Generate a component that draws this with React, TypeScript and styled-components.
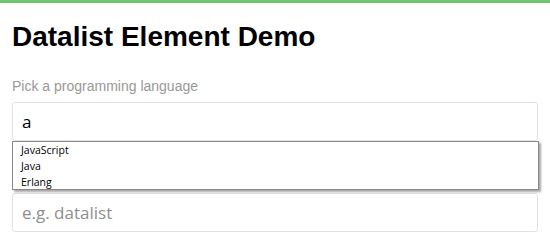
import React from "react";
import styled, { createGlobalStyle } from "styled-components";

const GlobalStyle = createGlobalStyle`
  html, body {
    margin: 0;
    padding: 0;
    background: #fff;
  }
  body {
    font-family: "Liberation Sans", Arial, sans-serif;
  }
`;

const TopBar = styled.div`
  height: 3px;
  background-color: #6cc66c;
`;

const Page = styled.div`
  padding: 0 12px;
`;

const Title = styled.h1`
  margin: 17px 0 0;
  font-family: "Liberation Sans", Arial, sans-serif;
  font-size: 28px;
  font-weight: bold;
  line-height: 33px;
  color: #000;
`;

const Label = styled.label`
  display: block;
  margin-top: 24px;
  font-size: 14px;
  line-height: 18px;
  color: #999;
`;

const Field = styled.div`
  position: relative;
  margin-top: 7px;
`;

const Input = styled.input<{ $gap?: number }>`
  display: block;
  box-sizing: border-box;
  width: 100%;
  height: 39px;
  margin-top: ${(p) => p.$gap ?? 0}px;
  padding: 0 9px;
  border: 1px solid #e2e2e2;
  border-radius: 3px;
  font-family: "Open Sans", "DejaVu Sans", sans-serif;
  font-size: 17px;
  color: #000;
  background: #fff;
  outline: none;

  &::placeholder {
    color: #8e8e8e;
  }
`;

const Popup = styled.ul`
  position: absolute;
  top: 39px;
  left: 0;
  right: -1px;
  box-sizing: border-box;
  height: 49px;
  margin: 0;
  padding: 0;
  list-style: none;
  border: 1px solid #8a8a8a;
  background: #fff;
  box-shadow: 2px 2px 2px rgba(0, 0, 0, 0.35);
  z-index: 2;
`;

const Option = styled.li`
  padding: 0 8px;
  font-family: "Open Sans", "DejaVu Sans", sans-serif;
  font-size: 10.5px;
  line-height: 16px;
  color: #000;
`;

const languages = ["JavaScript", "Java", "Erlang"];

export default function App() {
  return (
    <>
      <GlobalStyle />
      <TopBar />
      <Page>
        <Title>Datalist Element Demo</Title>
        <Label htmlFor="lang">Pick a programming language</Label>
        <Field>
          <Input id="lang" defaultValue="a" readOnly />
          <Popup>
            {languages.map((l) => (
              <Option key={l}>{l}</Option>
            ))}
          </Popup>
        </Field>
        <Input $gap={52} placeholder="e.g. datalist" />
      </Page>
    </>
  );
}
